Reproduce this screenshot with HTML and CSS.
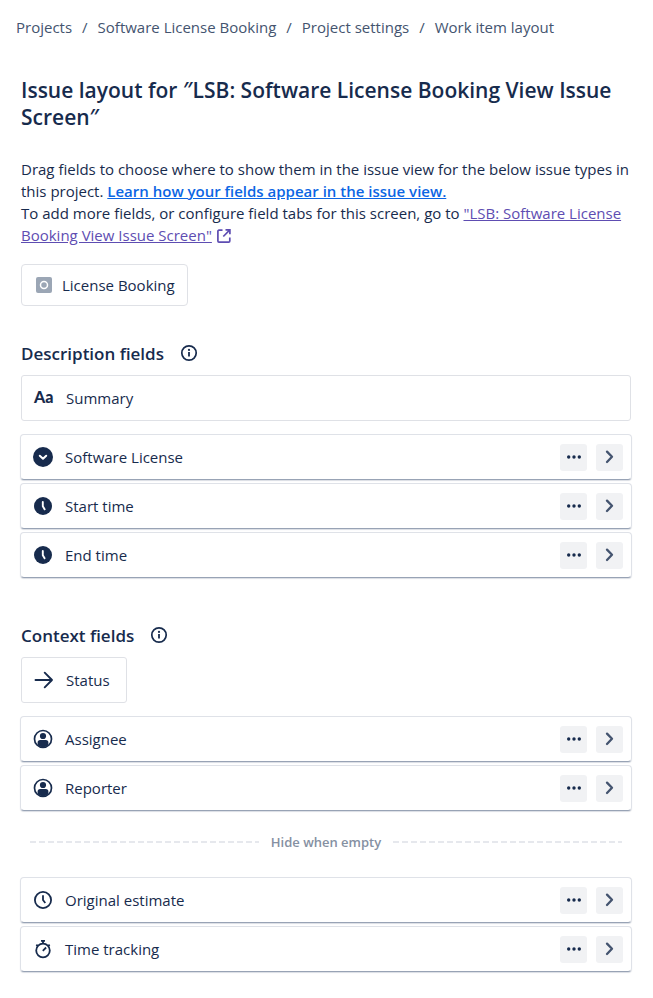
FILE: index.html
```html
<!DOCTYPE html>
<html lang="en">
<head>
    <meta charset="UTF-8">
    <meta name="viewport" content="width=device-width, initial-scale=1.0">
    <title>Work item layout</title>
    <link rel="stylesheet" href="styles.css">
</head>
<body>
    <!-- Shared icons -->
    <svg class="sprite" aria-hidden="true">
        <symbol id="icon-info" viewBox="0 0 18 18">
            <circle cx="9" cy="9" r="7.2" fill="none" stroke="currentColor" stroke-width="1.7"/>
            <circle cx="9" cy="5.9" r="1.1" fill="currentColor"/>
            <path d="M9 8v4.6" stroke="currentColor" stroke-width="1.8"/>
        </symbol>
        <symbol id="icon-select" viewBox="0 0 20 20">
            <circle cx="10" cy="10" r="10" fill="currentColor"/>
            <path d="M6.8 8.8l3.2 3 3.2-3" fill="none" stroke="#fff" stroke-width="2" stroke-linecap="round" stroke-linejoin="round"/>
        </symbol>
        <symbol id="icon-time" viewBox="0 0 20 20">
            <circle cx="10" cy="10" r="9" fill="currentColor"/>
            <path d="M9.8 6v4.3l1.8 3" fill="none" stroke="#fff" stroke-width="1.9" stroke-linecap="round" stroke-linejoin="round"/>
        </symbol>
        <symbol id="icon-user" viewBox="0 0 20 20">
            <circle cx="10" cy="10" r="8.5" fill="none" stroke="currentColor" stroke-width="1.7"/>
            <circle cx="10" cy="7" r="3.1" fill="currentColor"/>
            <path d="M4.6 16v-2.2c0-1.7.9-2.7 2.6-2.7h5.6c1.7 0 2.6 1 2.6 2.7V16c-1.5 1.5-3.3 2.2-5.4 2.2S6.1 17.5 4.6 16z" fill="currentColor"/>
        </symbol>
        <symbol id="icon-more" viewBox="0 0 16 16">
            <circle cx="2.7" cy="8" r="1.7" fill="currentColor"/>
            <circle cx="8" cy="8" r="1.7" fill="currentColor"/>
            <circle cx="13.3" cy="8" r="1.7" fill="currentColor"/>
        </symbol>
        <symbol id="icon-chevron" viewBox="0 0 16 16">
            <path d="M5 2.6l5 5.2-5 5.2" fill="none" stroke="currentColor" stroke-width="2.3" stroke-linecap="round" stroke-linejoin="round"/>
        </symbol>
    </svg>

    <nav class="breadcrumbs" aria-label="Breadcrumbs">
        <a href="#">Projects</a>
        <span>/</span>
        <a href="#">Software License Booking</a>
        <span>/</span>
        <a href="#">Project settings</a>
        <span>/</span>
        <a href="#">Work item layout</a>
    </nav>

    <main class="container">
        <h1>Issue layout for ″LSB: Software License Booking View Issue Screen″</h1>

        <p class="intro">
            Drag fields to choose where to show them in the issue view for the below issue types in this project.
            <a class="help-link" href="#">Learn how your fields appear in the issue view.</a><br>
            To add more fields, or configure field tabs for this screen, go to
            <a class="screen-link" href="#">"LSB: Software License Booking View Issue Screen"</a>
            <svg class="external" viewBox="0 0 16 16" aria-hidden="true">
                <path d="M6.5 2.2H3c-.7 0-1.1.4-1.1 1.1V13c0 .7.4 1.1 1.1 1.1h9.7c.7 0 1.1-.4 1.1-1.1V9.5M9.5 1.9h4.4v4.4M13.6 2.2L7.3 8.5" fill="none" stroke="currentColor" stroke-width="1.7"/>
            </svg>
        </p>

        <div class="issue-type">
            <svg class="type-icon" viewBox="0 0 16 16" aria-hidden="true">
                <rect width="16" height="16" rx="2" fill="#9ba6b5"/>
                <circle cx="8" cy="8" r="3.5" fill="none" stroke="#fff" stroke-width="1.5"/>
            </svg>
            <span>License Booking</span>
        </div>

        <!-- Description fields -->
        <section class="description-fields">
            <div class="section-head">
                <h2>Description fields</h2>
                <svg class="info" role="img" aria-label="Info"><use href="#icon-info"/></svg>
            </div>
            <div class="fixed-field">
                <span class="icon text-icon" aria-hidden="true">Aa</span>
                <span>Summary</span>
            </div>
            <ul class="fields">
                <li class="field">
                    <svg class="icon"><use href="#icon-select"/></svg>
                    <span class="name">Software License</span>
                    <button type="button" class="btn" aria-label="More actions"><svg><use href="#icon-more"/></svg></button>
                    <button type="button" class="btn btn-expand" aria-label="Expand"><svg><use href="#icon-chevron"/></svg></button>
                </li>
                <li class="field">
                    <svg class="icon"><use href="#icon-time"/></svg>
                    <span class="name">Start time</span>
                    <button type="button" class="btn" aria-label="More actions"><svg><use href="#icon-more"/></svg></button>
                    <button type="button" class="btn btn-expand" aria-label="Expand"><svg><use href="#icon-chevron"/></svg></button>
                </li>
                <li class="field">
                    <svg class="icon"><use href="#icon-time"/></svg>
                    <span class="name">End time</span>
                    <button type="button" class="btn" aria-label="More actions"><svg><use href="#icon-more"/></svg></button>
                    <button type="button" class="btn btn-expand" aria-label="Expand"><svg><use href="#icon-chevron"/></svg></button>
                </li>
            </ul>
        </section>

        <!-- Context fields -->
        <section class="context-fields">
            <div class="section-head">
                <h2>Context fields</h2>
                <svg class="info" role="img" aria-label="Info"><use href="#icon-info"/></svg>
            </div>
            <div class="fixed-field status">
                <svg class="icon" viewBox="0 0 20 20" aria-hidden="true">
                    <path d="M1.5 10H18M10.7 2.7L18 10l-7.3 7.3" fill="none" stroke="currentColor" stroke-width="1.9" stroke-linecap="round" stroke-linejoin="round"/>
                </svg>
                <span>Status</span>
            </div>
            <ul class="fields">
                <li class="field">
                    <svg class="icon"><use href="#icon-user"/></svg>
                    <span class="name">Assignee</span>
                    <button type="button" class="btn" aria-label="More actions"><svg><use href="#icon-more"/></svg></button>
                    <button type="button" class="btn btn-expand" aria-label="Expand"><svg><use href="#icon-chevron"/></svg></button>
                </li>
                <li class="field">
                    <svg class="icon"><use href="#icon-user"/></svg>
                    <span class="name">Reporter</span>
                    <button type="button" class="btn" aria-label="More actions"><svg><use href="#icon-more"/></svg></button>
                    <button type="button" class="btn btn-expand" aria-label="Expand"><svg><use href="#icon-chevron"/></svg></button>
                </li>
            </ul>

            <div class="divider">Hide when empty</div>

            <ul class="fields">
                <li class="field">
                    <svg class="icon" viewBox="0 0 20 20">
                        <circle cx="10" cy="10" r="8.1" fill="none" stroke="currentColor" stroke-width="1.8"/>
                        <path d="M10 5.3V10l2.3 3" fill="none" stroke="currentColor" stroke-width="1.8"/>
                    </svg>
                    <span class="name">Original estimate</span>
                    <button type="button" class="btn" aria-label="More actions"><svg><use href="#icon-more"/></svg></button>
                    <button type="button" class="btn btn-expand" aria-label="Expand"><svg><use href="#icon-chevron"/></svg></button>
                </li>
                <li class="field">
                    <svg class="icon" viewBox="0 0 20 20">
                        <circle cx="10" cy="11.5" r="6.8" fill="none" stroke="currentColor" stroke-width="1.8"/>
                        <path d="M8 1.9h4M10 2v3M9.8 11.8l3.3-3.3M3.3 5.8l1.8 1.5M16.7 5.8l-1.8 1.5" fill="none" stroke="currentColor" stroke-width="1.8"/>
                    </svg>
                    <span class="name">Time tracking</span>
                    <button type="button" class="btn" aria-label="More actions"><svg><use href="#icon-more"/></svg></button>
                    <button type="button" class="btn btn-expand" aria-label="Expand"><svg><use href="#icon-chevron"/></svg></button>
                </li>
            </ul>
        </section>
    </main>
</body>
</html>
```
FILE: styles.css
```css
body {
    margin: 0;
    font-family: "Open Sans", "Noto Sans", sans-serif;
    font-size: 15px;
    line-height: 22px;
    color: #172b4d;
    background-color: #fff;
}
h1, h2, p, ul {
    margin: 0;
    padding: 0;
}
.sprite {
    display: none;
}
.breadcrumbs {
    display: flex;
    flex-wrap: wrap;
    gap: 0 10px;
    padding: 16px 16px 0;
    color: #44546f;
}
.breadcrumbs a {
    color: #44546f;
    text-decoration: none;
}
.container {
    padding: 39px 22px 24px 21px;
}
h1 {
    font-size: 21px;
    font-weight: 600;
    line-height: 27px;
}
.intro {
    margin-top: 27px;
}
.help-link {
    color: #0c66e4;
    font-weight: 600;
}
.screen-link {
    color: #5e4db2;
}
.external {
    width: 16px;
    height: 16px;
    vertical-align: -3px;
    color: #5e4db2;
}
.issue-type {
    display: inline-flex;
    align-items: center;
    gap: 10px;
    height: 40px;
    margin-top: 18px;
    padding: 0 12px 0 14px;
    border: 1px solid #dfe1e6;
    border-radius: 4px;
}
.type-icon {
    width: 16px;
    height: 16px;
}

/* Sections */
.description-fields {
    margin-top: 36px;
}
.context-fields {
    margin-top: 46px;
}
.section-head {
    display: flex;
    align-items: center;
    gap: 16px;
    height: 24px;
}
h2 {
    font-size: 17px;
    font-weight: 600;
    line-height: 24px;
}
.info {
    width: 18px;
    height: 18px;
    margin-bottom: 3px;
}
.fixed-field {
    display: flex;
    align-items: center;
    gap: 12px;
    box-sizing: border-box;
    height: 46px;
    margin: 9px 0 13px;
    padding: 0 12px;
    border: 1px solid #dfe1e6;
    border-radius: 3px;
}
.status {
    width: fit-content;
    padding-right: 16px;
}
.icon {
    flex: none;
    width: 20px;
    height: 20px;
}
.text-icon {
    font-family: Lato, sans-serif;
    font-size: 16px;
    font-weight: 900;
    line-height: 18px;
}

/* Draggable rows */
.fields {
    display: flex;
    flex-direction: column;
    gap: 3px;
    margin: 0 -1px;
    list-style: none;
}
.field {
    display: flex;
    align-items: center;
    box-sizing: border-box;
    height: 46px;
    padding: 0 8px 0 12px;
    border: 1px solid #dfe2e8;
    border-bottom-color: #98a3b5;
    border-radius: 4px;
    box-shadow: 0 1px 1px rgba(9, 30, 66, 0.15);
}
.name {
    flex: 1;
    margin-left: 12px;
}
.btn {
    display: flex;
    align-items: center;
    justify-content: center;
    width: 27px;
    height: 27px;
    padding: 0;
    border: none;
    border-radius: 3px;
    background-color: #f1f2f4;
    color: #172b4d;
    cursor: pointer;
}
.btn:hover {
    background-color: #dcdfe4;
}
.btn svg {
    width: 16px;
    height: 16px;
}
.btn-expand {
    margin-left: 9px;
    color: #44546f;
}
.divider {
    display: flex;
    align-items: center;
    gap: 12px;
    margin: 20px 9px 24px;
    font-size: 13px;
    font-weight: 600;
    color: #8590a2;
}
.divider::before,
.divider::after {
    content: "";
    flex: 1;
    height: 2px;
    background: repeating-linear-gradient(to right, #e6e8ed 0 6px, transparent 6px 9px);
}
```
